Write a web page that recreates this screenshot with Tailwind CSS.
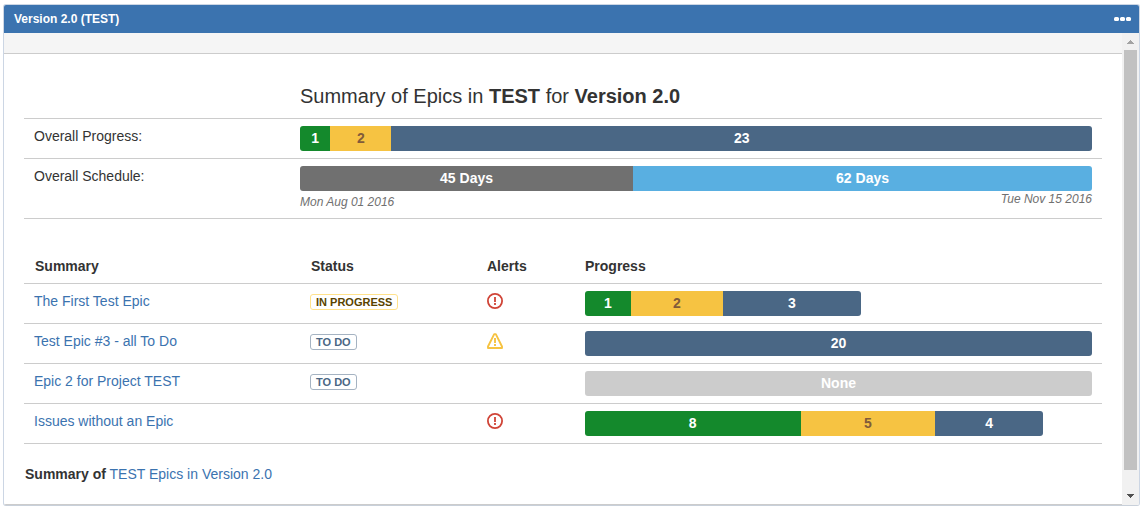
<!DOCTYPE html>
<html lang="en">
<head>
<meta charset="utf-8">
<meta name="viewport" content="width=device-width, initial-scale=1">
<title>Version 2.0 (TEST)</title>
<script src="https://cdn.jsdelivr.net/npm/@tailwindcss/browser@4"></script>
</head>
<body class="bg-white pt-1 pr-[5px] pb-1.5 pl-[3px] font-['Liberation_Sans',Arial,sans-serif] text-sm leading-5 text-[#333]">
<main class="overflow-hidden rounded-[3px] border border-[#ccd6e4] border-b-[#c8d0da]">
  <header class="-mx-px -mt-px flex h-[29px] items-center justify-between border-t border-[#4f81b5] bg-[#3b73af] pr-2 pl-[11px] text-white">
    <h1 class="text-xs font-bold">Version 2.0 (TEST)</h1>
    <button type="button" aria-label="Gadget menu" class="flex h-5 items-center">
      <svg class="h-1 w-[18px]" viewBox="0 0 18 4" fill="currentColor"><rect width="5" height="4" rx="1.5"/><rect x="6" width="5" height="4" rx="1.5"/><rect x="12" width="5" height="4" rx="1.5"/></svg>
    </button>
  </header>
  <div class="flex">
    <div class="min-w-0 flex-1 border-b border-[#ccc]">
      <div class="h-[21px] border-b border-[#ccc] bg-[#f5f5f5]"></div>
      <div class="px-5 pt-[30px] pb-5">
        <h2 class="pb-2.5 pl-[276px] text-xl leading-6">Summary of Epics in <strong>TEST</strong> for <strong>Version 2.0</strong></h2>
        <table class="w-full table-fixed border-collapse border-y border-[#ccc] text-left">
          <tbody>
            <tr class="h-10 border-b border-[#ccc] align-top">
              <th scope="row" class="w-[276px] pt-[7px] pl-2.5 font-normal">Overall Progress:</th>
              <td class="pt-[7px] pr-2.5">
                <div class="flex h-[25px] overflow-hidden rounded-[3px] text-center leading-[25px] font-bold text-white">
                  <div class="bg-[#14892c]" style="width:3.85%">1</div>
                  <div class="bg-[#f6c342] text-[#815b3a]" style="width:7.69%">2</div>
                  <div class="flex-1 bg-[#4a6785]">23</div>
                </div>
              </td>
            </tr>
            <tr class="h-[60px] align-top">
              <th scope="row" class="pt-[7px] pl-2.5 font-normal">Overall Schedule:</th>
              <td class="pt-[7px] pr-2.5">
                <div class="flex h-[25px] overflow-hidden rounded-[3px] text-center leading-[25px] font-bold text-white">
                  <div class="bg-[#707070]" style="width:42.06%">45 Days</div>
                  <div class="flex-1 bg-[#59afe1]">62 Days</div>
                </div>
                <div class="flex items-start justify-between text-xs leading-4 text-[#707070] italic">
                  <span class="pt-[3px]">Mon Aug 01 2016</span>
                  <span>Tue Nov 15 2016</span>
                </div>
              </td>
            </tr>
          </tbody>
        </table>
        <table class="mt-[30px] w-full table-fixed border-collapse border-b border-[#ccc] text-left">
          <thead>
            <tr class="h-[34px] border-b border-[#ccc] align-top">
              <th scope="col" class="w-[276px] pt-[7px] pl-[11px]">Summary</th>
              <th scope="col" class="w-[176px] pt-[7px] pl-[11px]">Status</th>
              <th scope="col" class="w-[98px] pt-[7px] pl-[11px]">Alerts</th>
              <th scope="col" class="pt-[7px] pl-[11px]">Progress</th>
            </tr>
          </thead>
          <tbody>
            <tr class="h-10 border-b border-[#ccc] align-top">
              <td class="pt-[7px] pl-2.5"><a href="#" class="text-[#3b73af]">The First Test Epic</a></td>
              <td class="pt-2.5 pl-2.5"><span class="block h-4 w-fit rounded-[3px] border border-[#ffe28c] px-[5px] text-[11px] leading-[14px] font-bold text-[#594300]">IN PROGRESS</span></td>
              <td class="pt-[9px] pl-[11px]">
                <svg class="size-4" viewBox="0 0 16 16" fill="none" stroke="#d04437" stroke-width="1.8" role="img" aria-label="Critical"><circle cx="8" cy="8" r="7.1"/><path d="M8 4v5M8 10v2"/></svg>
              </td>
              <td class="pt-[7px] pr-2.5 pl-[11px]">
                <div class="flex h-[25px] overflow-hidden rounded-[3px] text-center leading-[25px] font-bold text-white" style="width:54.44%">
                  <div class="bg-[#14892c]" style="width:16.67%">1</div>
                  <div class="bg-[#f6c342] text-[#815b3a]" style="width:33.33%">2</div>
                  <div class="flex-1 bg-[#4a6785]">3</div>
                </div>
              </td>
            </tr>
            <tr class="h-10 border-b border-[#ccc] align-top">
              <td class="pt-[7px] pl-2.5"><a href="#" class="text-[#3b73af]">Test Epic #3 - all To Do</a></td>
              <td class="pt-2.5 pl-2.5"><span class="block h-4 w-fit rounded-[3px] border border-[#a5b3c2] px-[5px] text-[11px] leading-[14px] font-bold text-[#4a6785]">TO DO</span></td>
              <td class="pt-[9px] pl-[11px]">
                <svg class="size-4" viewBox="0 0 16 16" fill="none" stroke="#f6c342" stroke-width="1.9" stroke-linejoin="round" role="img" aria-label="Warning"><path d="M7.2 1.1h1.6l6.2 12.4v1.5H1v-1.5z"/><path d="M8 5v5M8 11v2"/></svg>
              </td>
              <td class="pt-[7px] pr-2.5 pl-[11px]">
                <div class="h-[25px] rounded-[3px] bg-[#4a6785] text-center leading-[25px] font-bold text-white">20</div>
              </td>
            </tr>
            <tr class="h-10 border-b border-[#ccc] align-top">
              <td class="pt-[7px] pl-2.5"><a href="#" class="text-[#3b73af]">Epic 2 for Project TEST</a></td>
              <td class="pt-2.5 pl-2.5"><span class="block h-4 w-fit rounded-[3px] border border-[#a5b3c2] px-[5px] text-[11px] leading-[14px] font-bold text-[#4a6785]">TO DO</span></td>
              <td></td>
              <td class="pt-[7px] pr-2.5 pl-[11px]">
                <div class="h-[25px] rounded-[3px] bg-[#ccc] text-center leading-[25px] font-bold text-white">None</div>
              </td>
            </tr>
            <tr class="h-10 align-top">
              <td class="pt-[7px] pl-2.5"><a href="#" class="text-[#3b73af]">Issues without an Epic</a></td>
              <td></td>
              <td class="pt-[9px] pl-[11px]">
                <svg class="size-4" viewBox="0 0 16 16" fill="none" stroke="#d04437" stroke-width="1.8" role="img" aria-label="Critical"><circle cx="8" cy="8" r="7.1"/><path d="M8 4v5M8 10v2"/></svg>
              </td>
              <td class="pt-[7px] pr-2.5 pl-[11px]">
                <div class="flex h-[25px] overflow-hidden rounded-[3px] text-center leading-[25px] font-bold text-white" style="width:90.34%">
                  <div class="bg-[#14892c]" style="width:47.06%">8</div>
                  <div class="bg-[#f6c342] text-[#815b3a]" style="width:29.41%">5</div>
                  <div class="flex-1 bg-[#4a6785]">4</div>
                </div>
              </td>
            </tr>
          </tbody>
        </table>
        <p class="pt-5 pl-px"><strong>Summary of</strong> <a href="#" class="text-[#3b73af]">TEST Epics in Version 2.0</a></p>
      </div>
    </div>
    <div class="flex w-[17px] flex-col items-center bg-[#f1f1f1]" aria-hidden="true">
      <svg class="h-[17px] w-[17px]" viewBox="0 0 17 17" fill="#a3a3a3" shape-rendering="crispEdges"><path d="M5 11l3.5-4 3.5 4z"/></svg>
      <div class="w-[13px] flex-1 bg-[#c1c1c1]"></div>
      <svg class="mt-[18px] h-[17px] w-[17px]" viewBox="0 0 17 17" fill="#505050" shape-rendering="crispEdges"><path d="M5 6l3.5 4L12 6z"/></svg>
    </div>
  </div>
</main>
</body>
</html>
